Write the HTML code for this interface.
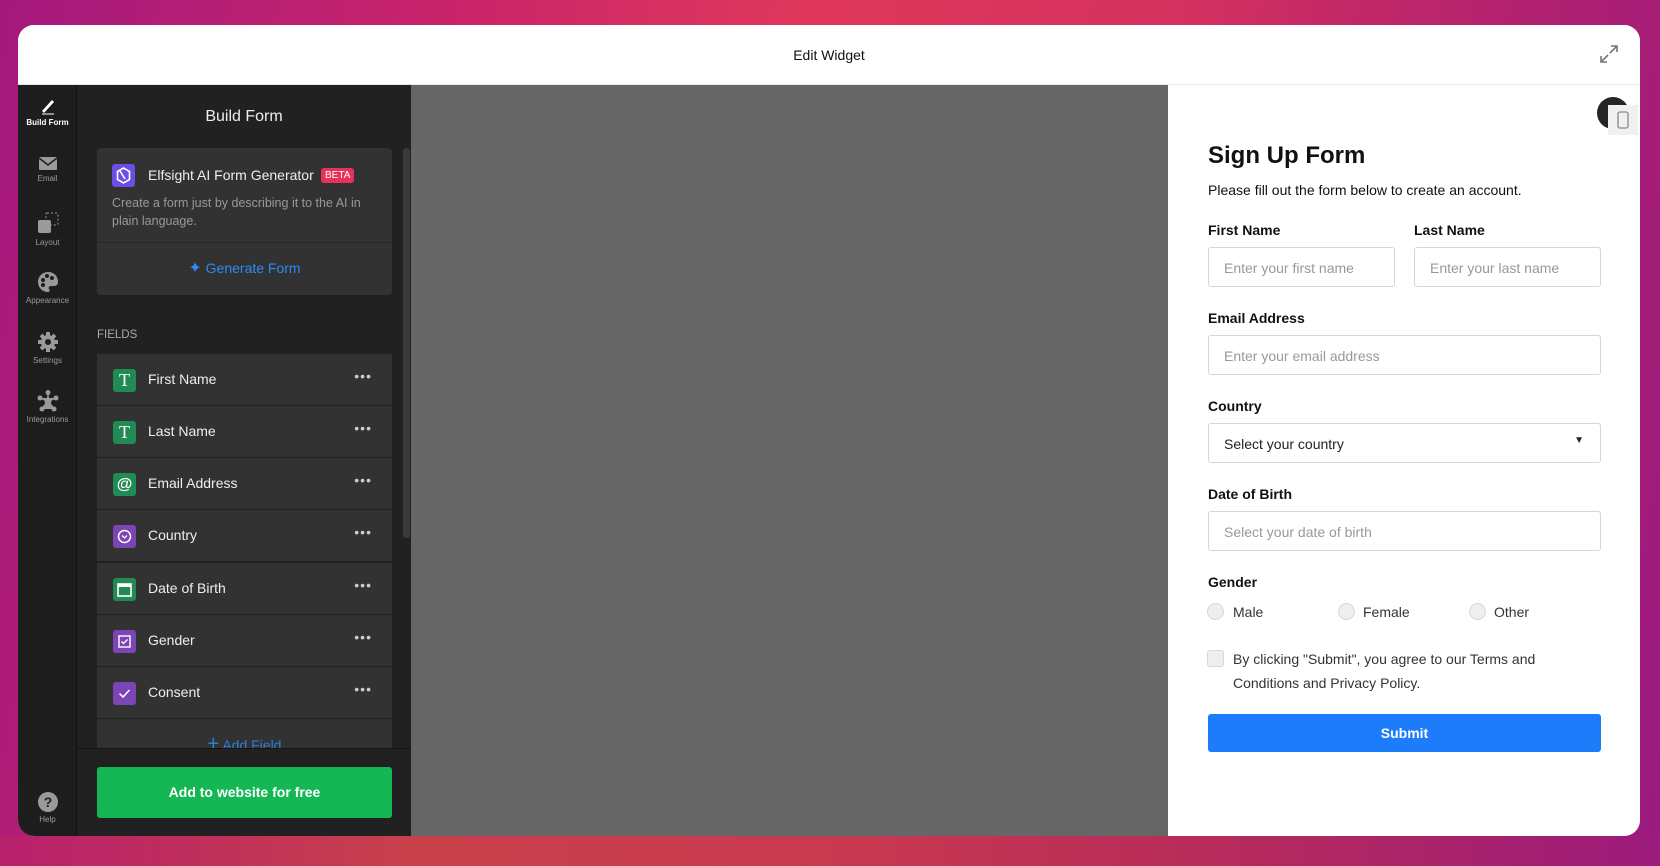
<!DOCTYPE html>
<html><head><meta charset="utf-8">
<style>
*{box-sizing:border-box;margin:0;padding:0}
html,body{width:1660px;height:866px;overflow:hidden}
body{font-family:"Liberation Sans",sans-serif;background:linear-gradient(100deg,#a4197e 0%,#c9246a 25%,#e0385c 45%,#d4315f 65%,#b02070 85%,#9b1a80 100%);position:relative}
.bot{position:absolute;left:0;right:0;top:836px;bottom:0;background:linear-gradient(90deg,#b8206c 0%,#c8404a 25%,#c9394f 50%,#b52a5c 75%,#9c1b7c 100%)}
.win{position:absolute;left:18px;top:25px;width:1622px;height:811px;border-radius:16px;overflow:hidden;background:#fff}
.hdr{position:absolute;left:0;top:0;width:100%;height:60px;background:#fff;border-bottom:1px solid #e8e8e8}
.hdr .t{position:absolute;left:0;right:0;top:22px;text-align:center;font-size:14px;color:#111}
.rail{position:absolute;left:0;top:60px;width:59px;bottom:0;background:#1d1d1d;border-right:1px solid #111}
.ri{position:absolute;left:0;width:59px;text-align:center;font-size:8px;color:#9a9a9a}
.ri svg{display:block;margin:0 auto 3px}
.panel{position:absolute;left:59px;top:60px;width:334px;bottom:0;background:#212121}
.ptitle{position:absolute;top:23px;left:0;right:0;text-align:center;color:#eee;font-size:16px}
.card{position:absolute;left:20px;width:295px;background:#323232;border-radius:4px}
.row{position:absolute;left:20px;width:295px;height:51px;background:#323232}
.row .ic{position:absolute;left:16px;top:15px;width:23px;height:23px;border-radius:3px}
.row .lb{position:absolute;left:51px;top:17px;color:#eee;font-size:14px}
.row .dots{position:absolute;right:20px;top:14px;color:#ccc;font-size:14px;letter-spacing:1px}
.g{background:#228a55}.p{background:#7b45b5}
.preview{position:absolute;left:393px;top:60px;width:757px;bottom:0;background:#666}
.form{position:absolute;left:1150px;top:60px;right:0;bottom:0;background:#fff}
.F{position:absolute;font-size:14px;color:#111}
.lbl{position:absolute;font-weight:bold;font-size:14px;color:#111}
.inp{position:absolute;height:40px;border:1px solid #d5d5d5;border-radius:3px;font-size:14px;color:#999;padding:12px 15px 0}
.rad{position:absolute;width:17px;height:17px;border-radius:50%;border:1px solid #d8d8d8;background:#eee}
</style></head><body>
<div class="bot"></div>
<div class="win">
 <div class="hdr"><div class="t">Edit Widget</div>
  <svg style="position:absolute;left:1580px;top:18px" width="22" height="22" viewBox="0 0 22 22" fill="none" stroke="#777" stroke-width="1.6"><path d="M13 3h6v6M19 3l-7 7M9 19H3v-6M3 19l7-7"/></svg>
 </div>
 <div class="rail">
  <div class="ri" style="top:12px;color:#fff;font-weight:bold"><svg width="20" height="18" viewBox="0 0 20 18"><path d="M4 14L14 3l2 2L6 16z" fill="#fff"/><path d="M4 17h12" stroke="#fff" stroke-width="1"/></svg>Build Form</div>
  <div class="ri" style="top:70px"><svg width="20" height="16" viewBox="0 0 20 16"><rect x="1" y="2" width="18" height="13" rx="1" fill="#9a9a9a"/><path d="M1 3l9 7 9-7" stroke="#1d1d1d" stroke-width="1.5" fill="none"/></svg>Email</div>
  <div class="ri" style="top:126px"><svg width="24" height="24" viewBox="0 0 24 24"><rect x="2" y="9" width="13" height="13" rx="2" fill="#9a9a9a"/><rect x="10" y="2" width="12" height="12" rx="1" fill="none" stroke="#9a9a9a" stroke-dasharray="2 2"/></svg>Layout</div>
  <div class="ri" style="top:186px"><svg width="22" height="22" viewBox="0 0 22 22"><path d="M11 1a10 10 0 100 20c2 0 2-2 1-3s0-3 2-3h3c3 0 4-2 4-4C21 5 17 1 11 1z" fill="#9a9a9a"/><circle cx="6" cy="9" r="2" fill="#1d1d1d"/><circle cx="10" cy="5" r="2" fill="#1d1d1d"/><circle cx="15" cy="7" r="2" fill="#1d1d1d"/><circle cx="6" cy="14" r="2" fill="#1d1d1d"/></svg>Appearance</div>
  <div class="ri" style="top:246px"><svg width="22" height="22" viewBox="0 0 22 22"><circle cx="11" cy="11" r="7" fill="#9a9a9a"/><g stroke="#9a9a9a" stroke-width="4"><path d="M11 1v20M1 11h20M4 4l14 14M18 4L4 18"/></g><circle cx="11" cy="11" r="3" fill="#1d1d1d"/></svg>Settings</div>
  <div class="ri" style="top:305px"><svg width="22" height="22" viewBox="0 0 22 22" fill="#9a9a9a"><circle cx="11" cy="11" r="3.5"/><circle cx="11" cy="2.5" r="2.5"/><circle cx="3" cy="8" r="2.5"/><circle cx="19" cy="8" r="2.5"/><circle cx="5" cy="19" r="2.5"/><circle cx="17" cy="19" r="2.5"/><path d="M11 3v8M3 8l8 3 8-3M5 19l6-8 6 8" stroke="#9a9a9a" stroke-width="1.6"/></svg>Integrations</div>
  <div class="ri" style="bottom:12px"><svg width="20" height="20" viewBox="0 0 20 20"><circle cx="10" cy="10" r="10" fill="#9a9a9a"/><text x="10" y="15" text-anchor="middle" font-size="14" font-weight="bold" fill="#1d1d1d" font-family="Liberation Sans">?</text></svg>Help</div>
 </div>
 <div class="panel">
  <div class="ptitle">Build Form</div>
  <div class="card" style="top:63px;height:147px">
   <div style="position:absolute;left:15px;top:16px;width:23px;height:23px;border-radius:3px;background:#6b4ee6"><svg width="23" height="23" viewBox="0 0 23 23"><path d="M11.5 4l6 3.5v8l-6 3.5-6-3.5v-8z" fill="none" stroke="#fff" stroke-width="1.6"/><path d="M8 7l5 8" stroke="#fff" stroke-width="1.6"/></svg></div>
   <div style="position:absolute;left:51px;top:19px;color:#eee;font-size:14px">Elfsight AI Form Generator</div>
   <div style="position:absolute;left:224px;top:20px;background:#e6325a;color:#fff;font-size:10px;padding:2px 4px;border-radius:3px">BETA</div>
   <div style="position:absolute;left:15px;top:46px;width:270px;color:#999;font-size:12.5px;line-height:18px">Create a form just by describing it to the AI in plain language.</div>
   <div style="position:absolute;left:0;right:0;top:94px;border-top:1px solid #262626"></div>
   <div style="position:absolute;left:0;right:0;top:110px;text-align:center;color:#2b8af7;font-size:14px"><span style="font-size:16px">✦</span> Generate Form</div>
  </div>
  <div style="position:absolute;left:20px;top:244px;color:#aaa;font-size:11.5px">FIELDS</div>
  <div class="row" style="top:269px"><div class="ic g" style="color:#fff;text-align:center;font:18px 'Liberation Serif';line-height:23px">T</div><div class="lb">First Name</div><div class="dots">•••</div></div>
  <div class="row" style="top:321px"><div class="ic g" style="color:#fff;text-align:center;font:18px 'Liberation Serif';line-height:23px">T</div><div class="lb">Last Name</div><div class="dots">•••</div></div>
  <div class="row" style="top:373px"><div class="ic g" style="color:#fff;text-align:center;font:bold 16px 'Liberation Sans';line-height:23px">@</div><div class="lb">Email Address</div><div class="dots">•••</div></div>
  <div class="row" style="top:425px"><div class="ic p"><svg width="23" height="23"><circle cx="11.5" cy="11.5" r="6" fill="none" stroke="#fff" stroke-width="1.5"/><path d="M9 10.5l2.5 2.5 2.5-2.5" fill="none" stroke="#fff" stroke-width="1.3"/></svg></div><div class="lb">Country</div><div class="dots">•••</div></div>
  <div class="row" style="top:478px"><div class="ic g"><svg width="23" height="23"><rect x="5" y="6" width="13" height="12" fill="none" stroke="#fff" stroke-width="1.6"/><rect x="5" y="6" width="13" height="3" fill="#fff"/></svg></div><div class="lb">Date of Birth</div><div class="dots">•••</div></div>
  <div class="row" style="top:530px"><div class="ic p"><svg width="23" height="23"><rect x="6" y="6" width="11" height="11" fill="none" stroke="#fff" stroke-width="1.4"/><path d="M8.5 11.5l2 2 4-4" fill="none" stroke="#fff" stroke-width="1.3"/></svg></div><div class="lb">Gender</div><div class="dots">•••</div></div>
  <div class="row" style="top:582px"><div class="ic p"><svg width="23" height="23"><path d="M6.5 11.5l3.5 3.5 6.5-7" fill="none" stroke="#fff" stroke-width="1.5"/></svg></div><div class="lb">Consent</div><div class="dots">•••</div></div>
  <div class="row" style="top:634px;height:29px;overflow:hidden"><div style="position:absolute;left:0;right:0;top:14px;text-align:center;color:#2b7de0;font-size:14px"><span style="font-size:20px">+</span> Add Field</div></div>
  <div style="position:absolute;left:326px;top:63px;width:7px;height:390px;background:#3a3a3a;border-radius:3px"></div>
  <div style="position:absolute;left:0;right:0;top:663px;bottom:0;background:#212121;border-top:1px solid #141414"></div>
  <div style="position:absolute;left:20px;top:682px;width:295px;height:51px;background:#14b754;border-radius:3px;color:#fff;font-weight:bold;font-size:14px;text-align:center;line-height:51px">Add to website for free</div>
 </div>
 <div class="preview"></div>
 <div class="form">
  <div style="position:absolute;left:429px;top:12px;width:32px;height:32px;border-radius:50%;background:#262626"></div>
  <div style="position:absolute;left:440px;top:20px;width:30px;height:30px;background:#f0f0f0"><svg width="30" height="30"><rect x="10" y="7" width="10" height="16" rx="2" fill="none" stroke="#888" stroke-width="1.3"/></svg></div>
  <div class="F" style="left:40px;top:57px;font-size:24px;font-weight:bold">Sign Up Form</div>
  <div class="F" style="left:40px;top:97px">Please fill out the form below to create an account.</div>
  <div class="lbl" style="left:40px;top:137px">First Name</div>
  <div class="lbl" style="left:246px;top:137px">Last Name</div>
  <div class="inp" style="left:40px;top:162px;width:187px">Enter your first name</div>
  <div class="inp" style="left:246px;top:162px;width:187px">Enter your last name</div>
  <div class="lbl" style="left:40px;top:225px">Email Address</div>
  <div class="inp" style="left:40px;top:250px;width:393px">Enter your email address</div>
  <div class="lbl" style="left:40px;top:313px">Country</div>
  <div class="inp" style="left:40px;top:338px;width:393px;color:#222">Select your country<span style="position:absolute;right:16px;top:11px;font-size:10px">▼</span></div>
  <div class="lbl" style="left:40px;top:401px">Date of Birth</div>
  <div class="inp" style="left:40px;top:426px;width:393px">Select your date of birth</div>
  <div class="lbl" style="left:40px;top:489px">Gender</div>
  <div class="rad" style="left:39px;top:518px"></div><div class="F" style="left:65px;top:519px;color:#333">Male</div>
  <div class="rad" style="left:170px;top:518px"></div><div class="F" style="left:195px;top:519px;color:#333">Female</div>
  <div class="rad" style="left:301px;top:518px"></div><div class="F" style="left:326px;top:519px;color:#333">Other</div>
  <div style="position:absolute;left:39px;top:565px;width:17px;height:17px;border-radius:3px;border:1px solid #d8d8d8;background:#eee"></div>
  <div class="F" style="left:65px;top:563px;width:330px;line-height:23.5px;color:#333">By clicking "Submit", you agree to our Terms and Conditions and Privacy Policy.</div>
  <div style="position:absolute;left:40px;top:629px;width:393px;height:38px;background:#1c7cf9;border-radius:3px;color:#fff;font-weight:bold;font-size:14px;text-align:center;line-height:38px">Submit</div>
 </div>
</div>
</body></html>
